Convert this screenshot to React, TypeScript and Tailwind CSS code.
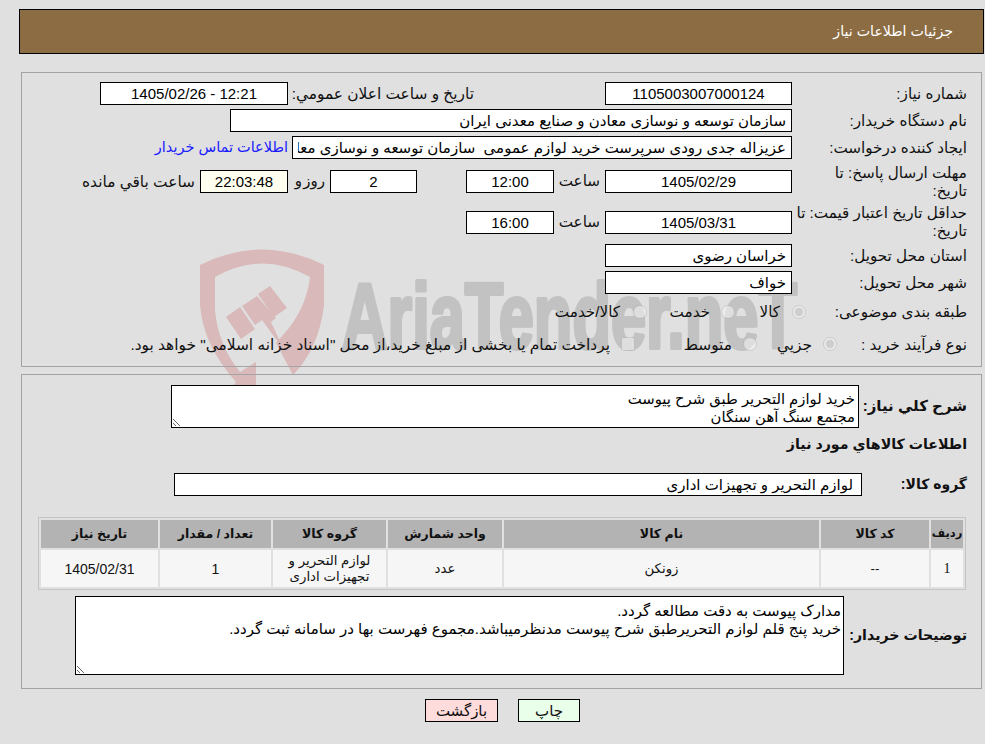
const boxClass =
  "h-[23px] border border-black bg-white px-[5px] text-[15px] text-black outline-none";

const Box = ({ value, width, center, bg }: { value: string; width: string; center?: boolean; bg?: string }) => (
  <input
    readOnly
    value={value}
    className={`${boxClass} ${width} ${center ? "text-center" : "text-right"} ${bg ?? ""}`}
  />
);

const Label = ({ children }: { children: React.ReactNode }) => (
  <div className="w-[175px] shrink-0 text-[15.2px] leading-[18px]">{children}</div>
);

const Watermark = () => (
  <svg className="absolute left-0 top-0 h-[744px] w-[985px]" viewBox="0 0 985 744">
    {/* shield */}
    <path
      fill="#d9b9b9"
      d="M200 265Q262 234 324 265L324 305Q319 348 293 375L276 343L283 335Q306 310 310 277Q262 250 215 277L215 310Q218 345 240 372L256 362L256 386L232 387L236 382Q203 345 200 305Z"
    />
    {/* gavel */}
    <path fill="#d9b9b9" d="M226 317L240 307L255 329L241 339Z" />
    <path fill="#d9b9b9" d="M242 306L257 296L276 318L271 322L284 350L262 320L255 325Z" />
    <path fill="#d9b9b9" d="M258 294L270 286L287 308L274 317Z" />
    <text
      x="342"
      y="348"
      direction="ltr"
      textAnchor="start"
      textLength="455"
      lengthAdjust="spacingAndGlyphs"
      fill="#c2c2c2"
      stroke="#c2c2c2"
      strokeWidth="4"
      strokeLinejoin="round"
      fontSize="92"
      fontWeight="700"
      fontFamily="Liberation Sans, sans-serif"
    >
      AriaTender.neT
    </text>
  </svg>
);

export default function App() {
  return (
    <div
      dir="rtl"
      className="relative h-[744px] overflow-hidden bg-[#e0e0e0] font-['Liberation_Sans','DejaVu_Sans',sans-serif] text-[#111111]"
    >
      <Watermark />
      <div className="relative pb-[22px] pl-[19px] pr-[1px] pt-[9px]">
        <div className="flex h-[45px] items-center border border-black bg-[#8c6c42] pr-[30px] text-[14.2px] text-white">
          جزئيات اطلاعات نياز
        </div>

        {/* main info */}
        <div className="mx-[2px] mt-[18px] flex flex-col gap-[4px] border border-[#a3a3a3] pb-[8px] pr-[14px] pt-[9px]">
          <div className="flex items-center">
            <Label>شماره نياز:</Label>
            <Box value="1105003007000124" width="w-[187px]" center />
            <div className="w-[317px] pr-[131px] text-[15.4px]">تاريخ و ساعت اعلان عمومي:</div>
            <Box value="12:21 - 1405/02/26" width="w-[188px]" center />
          </div>
          <div className="flex items-center">
            <Label>نام دستگاه خریدار:</Label>
            <Box value="سازمان توسعه و نوسازی معادن و صنایع معدنی ایران" width="w-[562px]" />
          </div>
          <div className="flex items-center">
            <Label>ایجاد کننده درخواست:</Label>
            <Box
              value="عزیزاله جدی رودی سرپرست خرید لوازم عمومی  سازمان توسعه و نوسازی معادن و صنایع معدنی ایران"
              width="w-[500px]"
            />
            <a className="mr-[4px] pt-[1px] text-[14.5px] text-[#1a1aff]">اطلاعات تماس خریدار</a>
          </div>
          <div className="flex min-h-[37px] items-center">
            <Label>
              مهلت ارسال پاسخ: تا
              <br />
              تاریخ:
            </Label>
            <Box value="1405/02/29" width="w-[187px]" center />
            <div className="w-[51px] pr-[5px] text-[15.2px]">ساعت</div>
            <Box value="12:00" width="w-[88px]" center />
            <Box value="2" width="mr-[49px] w-[87px]" center />
            <div className="w-[42px] pr-[5px] text-[15px] [word-spacing:-3px]">روز و</div>
            <Box value="22:03:48" width="w-[88px]" center bg="!bg-[#fffff0]" />
            <div className="pr-[5px] text-[15.4px]">ساعت باقي مانده</div>
          </div>
          <div className="flex min-h-[36px] items-center">
            <Label>
              حداقل تاریخ اعتبار قیمت: تا
              <br />
              تاریخ:
            </Label>
            <Box value="1405/03/31" width="w-[187px]" center />
            <div className="w-[51px] pr-[5px] text-[15.2px]">ساعت</div>
            <Box value="16:00" width="w-[88px]" center />
          </div>
          <div className="flex items-center">
            <Label>استان محل تحویل:</Label>
            <Box value="خراسان رضوی" width="w-[187px]" />
          </div>
          <div className="flex items-center">
            <Label>شهر محل تحویل:</Label>
            <Box value="خواف" width="w-[187px]" />
          </div>
          <div className="flex h-[28px] items-center text-[15.2px]">
            <div className="w-[161px]">طبقه بندی موضوعی:</div>
            <input type="radio" disabled checked readOnly className="m-0 size-[14px] opacity-80" />
            <div className="mr-[12px] w-[45px]">کالا</div>
            <input type="radio" disabled className="m-0 size-[14px] opacity-80" />
            <div className="mr-[11px] w-[63px]">خدمت</div>
            <input type="radio" disabled className="m-0 size-[14px] opacity-80" />
            <div className="mr-[13px]">کالا/خدمت</div>
          </div>
          <div className="flex h-[28px] items-center text-[15.4px]">
            <div className="w-[130px]">نوع فرآیند خرید :</div>
            <input type="radio" disabled checked readOnly className="m-0 size-[14px] opacity-80" />
            <div className="mr-[11px] w-[55px]">جزيي</div>
            <input type="radio" disabled className="m-0 size-[14px] opacity-80" />
            <div className="mr-[11px] w-[97px]">متوسط</div>
            <input type="checkbox" disabled className="m-0 size-[14px] opacity-80" />
            <div className="mr-[11px] whitespace-nowrap">
              پرداخت تمام یا بخشی از مبلغ خرید،از محل "اسناد خزانه اسلامی" خواهد بود.
            </div>
          </div>
        </div>

        {/* goods */}
        <div className="mx-[2px] mt-[7px] border border-[#a3a3a3] pb-[13px] pr-[14px] pt-[10px]">
          <div className="flex items-center">
            <div className="w-[108px] shrink-0 text-[15px] font-bold">شرح کلي نياز:</div>
            <textarea
              readOnly
              value={"خرید لوازم التحریر طبق شرح پیوست\nمجتمع سنگ آهن سنگان"}
              className="h-[43px] w-[688px] border border-black bg-white px-[3px] pt-[4px] text-[14.8px] leading-[18px] text-black outline-none"
            />
          </div>
          <div className="mt-[6px] h-[20px] text-[14.2px] font-bold leading-[20px]">اطلاعات کالاهاي مورد نياز</div>
          <div className="mt-[19px] flex items-center">
            <div className="w-[105px] shrink-0 text-[14px] font-bold">گروه کالا:</div>
            <Box value="لوازم التحریر و تجهیزات اداری" width="w-[688px] !pr-[8px]" />
          </div>
          <table className="mr-[1px] mt-[21px] h-[73px] w-[928px] table-fixed border-separate border-spacing-[2px] border border-[#c4c4c4] text-[13.3px]">
            <thead>
              <tr className="h-[28px] bg-[#b3b3b3] text-[12.5px] font-bold">
                <th className="w-[32px] text-[11.5px]">ردیف</th>
                <th className="w-[108px]">کد کالا</th>
                <th className="w-[315px]">نام کالا</th>
                <th className="w-[114px]">واحد شمارش</th>
                <th className="w-[113px]">گروه کالا</th>
                <th className="w-[111px]">تعداد / مقدار</th>
                <th>تاریخ نیاز</th>
              </tr>
            </thead>
            <tbody>
              <tr className="bg-[#f6f6f6] text-center leading-[16px]">
                <td className="font-['Liberation_Serif',serif] text-[14px]">1</td>
                <td>--</td>
                <td>زونکن</td>
                <td>عدد</td>
                <td>
                  لوازم التحریر و
                  <br />
                  تجهیزات اداری
                </td>
                <td className="text-[14px]">1</td>
                <td className="text-[14px]">1405/02/31</td>
              </tr>
            </tbody>
          </table>
          <div className="mt-[6px] flex items-center">
            <div className="w-[123px] shrink-0 whitespace-nowrap text-[14.2px] font-bold">توضیحات خریدار:</div>
            <textarea
              readOnly
              value={"مدارک پیوست به دقت مطالعه گردد.\nخرید پنج قلم لوازم التحریرطبق شرح پیوست مدنظرمیباشد.مجموع فهرست بها در سامانه ثبت گردد."}
              className="h-[79px] w-[769px] border border-black bg-white px-[2px] pt-[5px] text-[15px] leading-[18px] text-black outline-none"
            />
          </div>
        </div>

        {/* actions */}
        <div className="mt-[10px] flex justify-center gap-[20px] pl-[2px]">
          <button className="h-[23px] w-[62px] border border-black bg-[#eaffea] text-[15px]">چاپ</button>
          <button className="h-[23px] w-[73px] border border-black bg-[#ffdcdc] text-[15px]">بازگشت</button>
        </div>
      </div>
    </div>
  );
}
